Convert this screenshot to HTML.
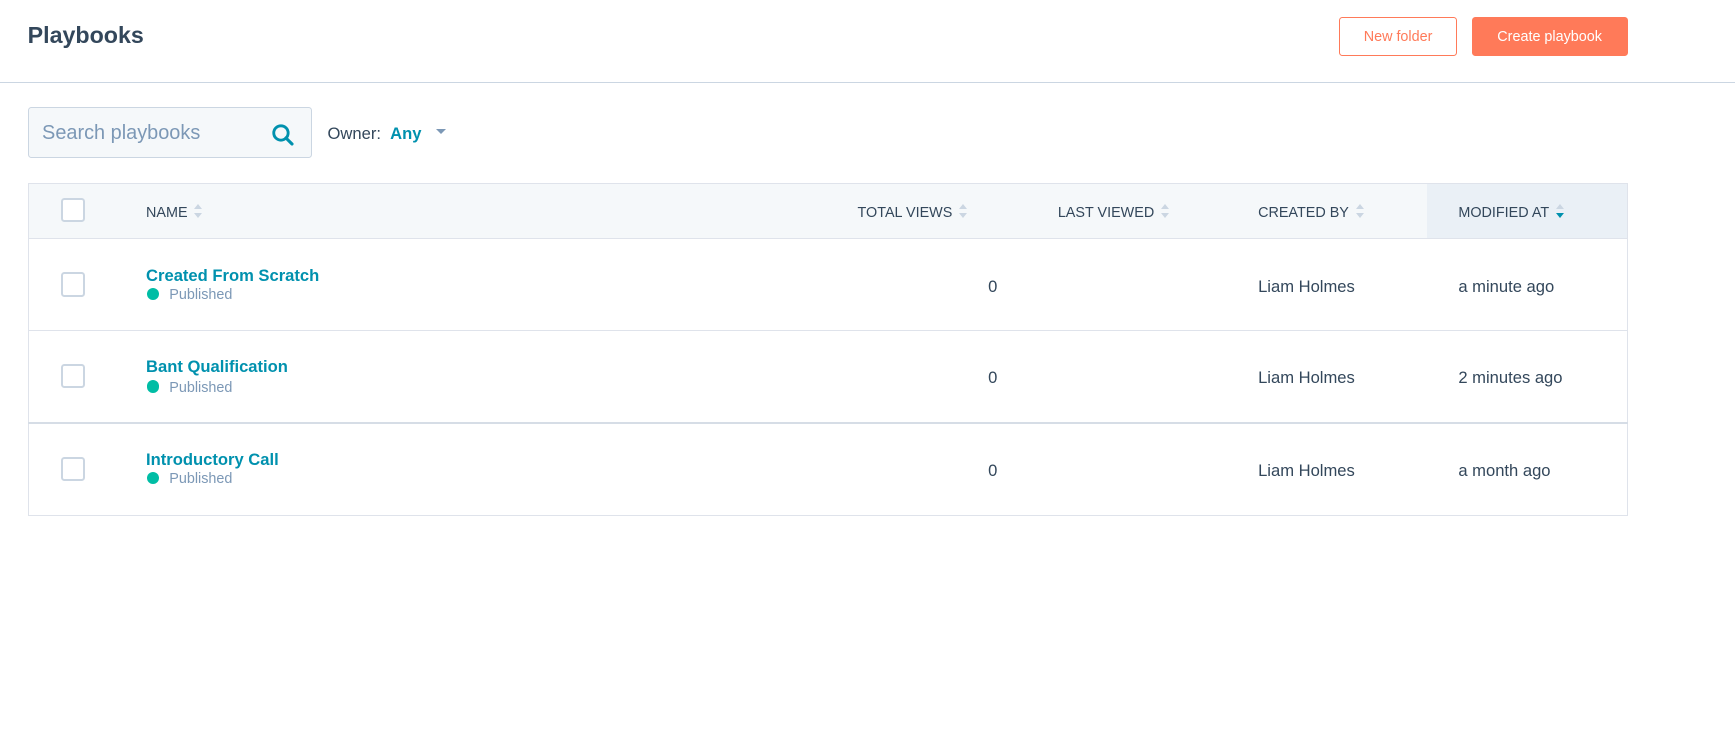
<!DOCTYPE html>
<html><head><style>
html,body{margin:0;padding:0;background:#fff;}
body{width:1735px;height:734px;overflow:hidden;}
#w{zoom:1.1065;width:1568px;height:664px;position:relative;font-family:"Liberation Sans",sans-serif;color:#33475b;}
.a{position:absolute;white-space:nowrap;}
.btn{position:absolute;box-sizing:border-box;border-radius:3px;font-size:13px;display:flex;align-items:center;justify-content:center;}
.cb{position:absolute;left:55px;width:22px;height:22px;box-sizing:border-box;border:2px solid #cbd6e2;border-radius:3px;background:#fff;}
.hd{position:absolute;top:185px;font-size:13px;color:#33475b;}
.sort{display:inline-block;vertical-align:middle;margin-left:6px;width:8px;height:14px;position:relative;top:-1px;}
.sort:before{content:"";position:absolute;left:0;top:0;border:4px solid transparent;border-bottom:5px solid #cbd6e2;border-top:0;}
.sort:after{content:"";position:absolute;left:0;top:8px;border:4px solid transparent;border-top:5px solid #cbd6e2;border-bottom:0;}
.sort.d:after{border-top-color:#0091ae;}
.nm{position:absolute;left:132px;font-size:15px;font-weight:bold;color:#0091ae;}
.pub{position:absolute;left:133px;font-size:13px;color:#7c98b6;}
.pub i{display:inline-block;width:11px;height:11px;border-radius:50%;background:#00bda5;margin-right:9px;vertical-align:-1px;}
.c{position:absolute;font-size:15px;color:#33475b;}
.rl{position:absolute;left:25px;width:1446px;height:1px;background:#dfe3eb;}
</style></head><body><div id="w">
<div class="a" style="left:25px;top:20px;font-size:21px;font-weight:bold;">Playbooks</div>
<div class="btn" style="left:1210px;top:15px;width:107px;height:36px;border:1px solid #ff7a59;color:#ff7a59;">New folder</div>
<div class="btn" style="left:1330px;top:15px;width:141px;height:36px;background:#ff7a59;color:#fff;">Create playbook</div>
<div class="a" style="left:0;top:74px;width:1568px;height:1px;background:#cbd6e2;"></div>

<div class="a" style="left:25px;top:97px;width:257px;height:46px;box-sizing:border-box;border:1px solid #cbd6e2;border-radius:3px;background:#f5f8fa;"></div>
<div class="a" style="left:38px;top:110px;font-size:18px;color:#7c98b6;">Search playbooks</div>
<svg class="a" style="left:245px;top:111px" width="22" height="22" viewBox="0 0 22 22"><circle cx="9" cy="9" r="6.5" fill="none" stroke="#0091ae" stroke-width="2.6"/><path d="M13.5 13.5L19 19" stroke="#0091ae" stroke-width="2.8" stroke-linecap="round"/></svg>
<div class="a" style="left:296px;top:112px;font-size:15px;">Owner:&nbsp; <b style="color:#0091ae">Any</b></div>
<div class="a" style="left:394px;top:117px;border:5px solid transparent;border-top:5px solid #7c98b6;border-bottom:0;"></div>

<div class="a" style="left:25px;top:165px;width:1446px;height:301px;box-sizing:border-box;border:1px solid #dfe3eb;"></div>
<div class="a" style="left:26px;top:166px;width:1264px;height:49px;background:#f5f8fa;"></div>
<div class="a" style="left:1290px;top:166px;width:180px;height:49px;background:#eaf0f6;"></div>
<div class="rl" style="top:215px"></div>
<div class="rl" style="top:298px"></div>
<div class="rl" style="top:381px;height:2px;background:#d6dde6"></div>
<div class="cb" style="top:179px"></div>
<div class="hd" style="left:132px">NAME<span class="sort"></span></div>
<div class="hd" style="left:775px">TOTAL VIEWS<span class="sort"></span></div>
<div class="hd" style="left:956px">LAST VIEWED<span class="sort"></span></div>
<div class="hd" style="left:1137px">CREATED BY<span class="sort"></span></div>
<div class="hd" style="left:1318px">MODIFIED AT<span class="sort d"></span></div>

<div class="cb" style="top:246px"></div>
<div class="nm" style="top:240px">Created From Scratch</div>
<div class="pub" style="top:259px"><i></i>Published</div>
<div class="c" style="left:893px;top:250px">0</div>
<div class="c" style="left:1137px;top:250px">Liam Holmes</div>
<div class="c" style="left:1318px;top:250px">a minute ago</div>

<div class="cb" style="top:329px"></div>
<div class="nm" style="top:323px">Bant Qualification</div>
<div class="pub" style="top:343px"><i></i>Published</div>
<div class="c" style="left:893px;top:333px">0</div>
<div class="c" style="left:1137px;top:333px">Liam Holmes</div>
<div class="c" style="left:1318px;top:333px">2 minutes ago</div>

<div class="cb" style="top:413px"></div>
<div class="nm" style="top:407px">Introductory Call</div>
<div class="pub" style="top:426px"><i></i>Published</div>
<div class="c" style="left:893px;top:417px">0</div>
<div class="c" style="left:1137px;top:417px">Liam Holmes</div>
<div class="c" style="left:1318px;top:417px">a month ago</div>
</div></body></html>
